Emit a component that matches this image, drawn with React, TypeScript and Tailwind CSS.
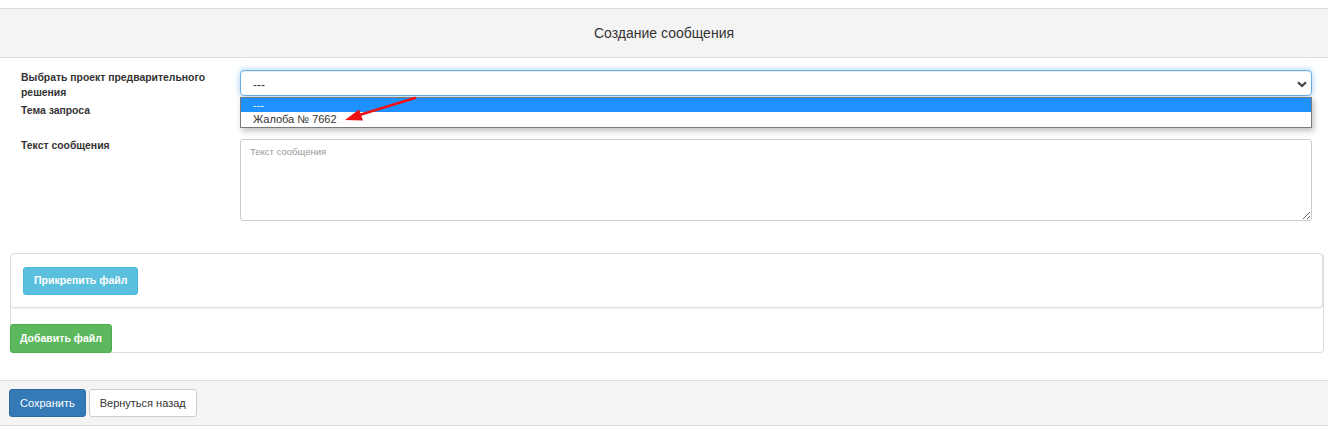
import React from 'react';

const FONT = { fontFamily: '"Liberation Sans", Arial, sans-serif' };

function Chevron() {
  return (
    <svg width="10" height="7" viewBox="0 0 10 7" className="absolute right-[4px] top-[10px]">
      <path d="M1 1.2 L5 5 L9 1.2" fill="none" stroke="#444" strokeWidth="2.2" />
    </svg>
  );
}

function RedArrow() {
  return (
    <svg
      width="80"
      height="30"
      viewBox="0 0 80 30"
      className="pointer-events-none absolute left-[340px] top-[95px] z-20"
    >
      <line x1="75" y1="3" x2="16" y2="21" stroke="#ee1111" strokeWidth="2.5" strokeLinecap="round" />
      <polygon points="5,25 19,14.5 23,25.5" fill="#ee1111" />
    </svg>
  );
}

export default function App() {
  return (
    <div className="relative w-[1328px] h-[429px] bg-white text-[#333] pt-[8px]" style={FONT}>
      {/* Header */}
      <div className="h-[50px] border-y border-[#dddddd] bg-[#f4f4f4] flex items-center justify-center">
        <span className="text-[14px] text-[#333]">Создание сообщения</span>
      </div>

      {/* Form */}
      <div className="pl-[21px] pr-[16px] pt-[12px]">
        <div className="flex items-start">
          <div className="w-[219px] shrink-0 text-[10.4px] font-bold leading-[15px] text-[#333]">
            Выбрать проект предварительного
            <br />
            решения
          </div>
          <div className="relative flex-1">
            <div className="relative h-[26px] rounded-[4px] border border-[#66afe9] bg-white shadow-[inset_0_1px_1px_rgba(0,0,0,0.075),0_0_6px_rgba(102,175,233,0.6)]">
              <span className="absolute left-[12px] top-[5px] text-[12px] text-[#333]">---</span>
              <Chevron />
            </div>
            {/* open list */}
            <div className="absolute left-0 right-0 top-[27px] z-10 border border-[#7a7a7a] bg-white shadow-[2px_3px_6px_rgba(0,0,0,0.25)]">
              <div className="h-[14px] bg-[#1e90ff] pl-[12px] text-[11px] leading-[14px] text-white">---</div>
              <div className="h-[15px] pl-[12px] text-[11px] leading-[15px] text-[#333]">Жалоба № 7662</div>
            </div>
          </div>
        </div>

        <div className="mt-[3px] text-[10.4px] font-bold leading-[15px]">Тема запроса</div>

        <div className="mt-[21px] flex items-start">
          <div className="w-[219px] shrink-0 -mt-[1px] text-[10.4px] font-bold leading-[15px]">Текст сообщения</div>
          <textarea
            placeholder="Текст сообщения"
            className="flex-1 h-[82px] rounded-[3px] border border-[#cccccc] px-[9px] pt-[5px] text-[9.5px] leading-[14px] outline-none placeholder:text-[#999]"
            style={FONT}
          />
        </div>
      </div>

      {/* Attachments panel */}
      <div className="mt-[32px] ml-[10px] mr-[4px] h-[100px] rounded-[4px] border border-[#dddddd] bg-white">
        <div className="h-[54px] rounded-[4px] border-r border-b border-[#dddddd] pl-[12px] pt-[13px] shadow-[0_1px_1px_rgba(0,0,0,0.05)]">
          <button className="h-[28px] rounded-[3px] border border-[#46b8da] bg-[#5bc0de] px-[10px] text-[10.5px] font-bold text-white">
            Прикрепить файл
          </button>
        </div>
        <button className="-ml-[1px] mt-[16px] h-[29px] rounded-[3px] border border-[#4cae4c] bg-[#5cb85c] px-[9px] text-[10.5px] font-bold text-white">
          Добавить файл
        </button>
      </div>

      {/* Footer */}
      <div className="mt-[27px] flex items-center gap-[3px] border-y border-[#dddddd] bg-[#f4f4f4] px-[9px] py-[8px]">
        <button className="h-[28px] rounded-[3px] border border-[#2e6da4] bg-[#337ab7] px-[10px] text-[11px] text-white">
          Сохранить
        </button>
        <button className="h-[28px] rounded-[3px] border border-[#cccccc] bg-white px-[10px] text-[11px] text-[#333]">
          Вернуться назад
        </button>
      </div>

      <RedArrow />
    </div>
  );
}
